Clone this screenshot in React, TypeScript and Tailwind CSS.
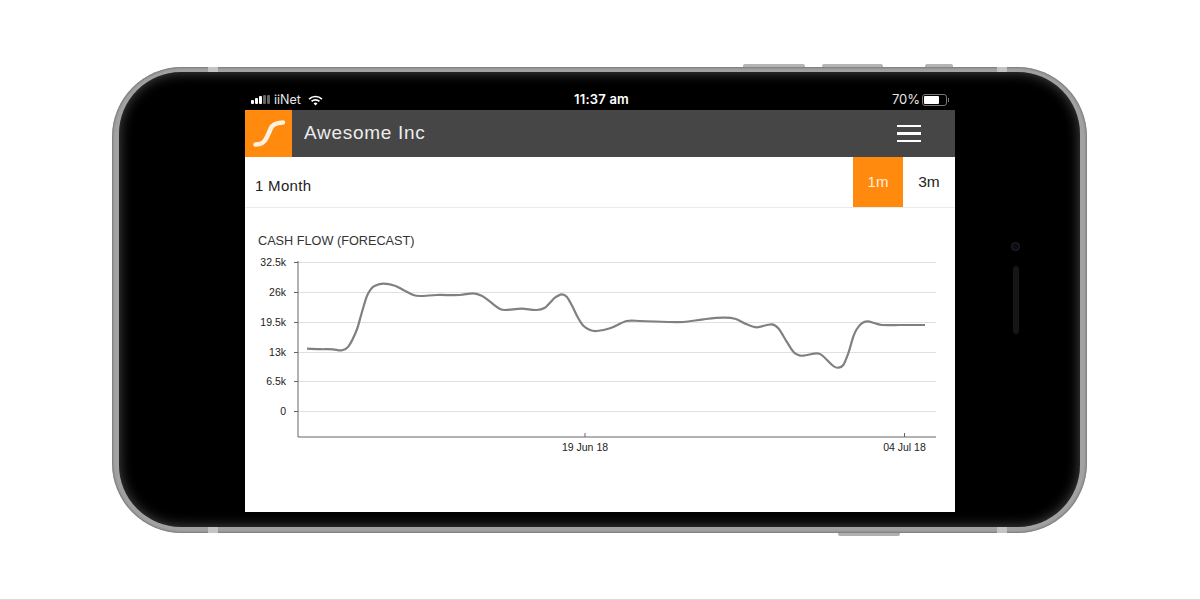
// curve points read off the screenshot, in page pixels
const cashFlow: [number, number][] = [
  [307, 348.7], [320, 349.2], [333, 349.3], [341.7, 350.3], [348.3, 346.7], [356.7, 330], [361.7, 313], [366.7, 296.7],
  [370.7, 289.3], [375, 285.7], [383.3, 283.7], [395, 285.7], [403.3, 290], [413.3, 295], [420, 296], [436.7, 295],
  [460, 295], [473.3, 293.3], [481.7, 295.7], [490, 301.7], [500, 309], [505, 310], [521.7, 308.7],
  [536.7, 310], [545, 307.7], [550, 302.7], [555, 297.7], [561.7, 294.3], [566.7, 296.7], [571.7, 305], [578.3, 318.3],
  [583.3, 325.7], [590, 330], [596.7, 331], [610, 328.3], [626.7, 321], [640, 321], [683.3, 322], [703.3, 319.3],
  [723.3, 317.7], [735, 318.7], [746.7, 324.3], [756.7, 327.3], [771.7, 324.3], [778.3, 328.3],
  [786.7, 341.7], [793.3, 351.7], [798.3, 355], [803.3, 355.7], [816.7, 353.3], [821.7, 355], [833.3, 366], [838.3, 367.7],
  [843.3, 365], [848.3, 353.3], [853.3, 336.7], [856.7, 329.3], [861.7, 323.3], [867.3, 321.3], [875, 323.3], [881.7, 325],
  [900, 325], [925, 325],
];

const yTicks = [
  { label: "32.5k", y: 262.5 },
  { label: "26k", y: 292.5 },
  { label: "19.5k", y: 322.5 },
  { label: "13k", y: 352.5 },
  { label: "6.5k", y: 381.5 },
  { label: "0", y: 411.5 },
];

const xTicks = [
  { label: "19 Jun 18", x: 585 },
  { label: "04 Jul 18", x: 904.5 },
];

// hermite through the points, slope taken from the neighbours so x never doubles back
function smoothPath(pts: [number, number][]) {
  const slope = (i: number) => {
    const a = pts[Math.max(i - 1, 0)];
    const b = pts[Math.min(i + 1, pts.length - 1)];
    return (b[1] - a[1]) / (b[0] - a[0]);
  };
  let d = `M${pts[0][0]} ${pts[0][1]}`;
  for (let i = 0; i < pts.length - 1; i++) {
    const p1 = pts[i];
    const p2 = pts[i + 1];
    const dx = (p2[0] - p1[0]) / 3;
    const c1y = p1[1] + slope(i) * dx;
    const c2y = p2[1] - slope(i + 1) * dx;
    d += ` C${(p1[0] + dx).toFixed(1)} ${c1y.toFixed(1)} ${(p2[0] - dx).toFixed(1)} ${c2y.toFixed(1)} ${p2[0]} ${p2[1]}`;
  }
  return d;
}

function Chart() {
  return (
    <svg viewBox="245 252 710 208" className="block w-[710px] h-[208px]">
      {yTicks.map((t) => (
        <g key={t.label}>
          <line x1="298" x2="936" y1={t.y} y2={t.y} stroke="#e0e0e0" strokeWidth="1" />
          <line x1="294" x2="298" y1={t.y} y2={t.y} stroke="#666" strokeWidth="1" />
          <text
            x="286"
            y={t.y + 3.5}
            textAnchor="end"
            fontSize="10.5"
            fill="#222"
            fontFamily="'Liberation Sans', sans-serif"
          >
            {t.label}
          </text>
        </g>
      ))}
      <path d="M298 261V437H936" fill="none" stroke="#666" strokeWidth="1" />
      {xTicks.map((t) => (
        <g key={t.label}>
          <line x1={t.x} x2={t.x} y1="433" y2="437" stroke="#666" strokeWidth="1" />
          <text
            x={t.x}
            y="451"
            textAnchor="middle"
            fontSize="10.5"
            fill="#222"
            fontFamily="'Liberation Sans', sans-serif"
          >
            {t.label}
          </text>
        </g>
      ))}
      <path d={smoothPath(cashFlow)} fill="none" stroke="#808080" strokeWidth="2.2" strokeLinejoin="round" />
    </svg>
  );
}

function StatusBar() {
  return (
    <div className="h-[22px] pt-[2px] bg-black text-white flex items-center pl-[6px] pr-[6px] text-[12.5px] font-['Inter',sans-serif] relative">
      <div className="flex items-end gap-[1px] h-[8px]">
        <span className="w-[3px] h-[4px] bg-white rounded-[1px]" />
        <span className="w-[3px] h-[6px] bg-white rounded-[1px]" />
        <span className="w-[3px] h-[8px] bg-white rounded-[1px]" />
        <span className="w-[3px] h-[9px] bg-[#666] rounded-[1px]" />
        <span className="w-[3px] h-[9px] bg-[#666] rounded-[1px]" />
      </div>
      <span className="ml-[4px] text-[#e8e8e8]">iiNet</span>
      <svg viewBox="0 0 16 12" className="ml-[7px] w-[15px] h-[11px]" fill="none" stroke="white">
        <path d="M1 4.500a10 10 0 0 1 14 0" strokeWidth="1.8" />
        <path d="M3.700 7a6.200 6.200 0 0 1 8.600 0" strokeWidth="1.8" />
        <path d="M8 11.500 5.900 9.200a3 3 0 0 1 4.200 0z" fill="white" stroke="none" />
      </svg>
      <span className="absolute left-[329px] font-semibold text-[13px] tracking-[0.2px]">11:37 am</span>
      <div className="ml-auto flex items-center">
        <span className="text-[#e8e8e8] text-[13px]">70%</span>
        <div className="ml-[2px] w-[25px] h-[12px] border border-[#777] rounded-[3px] p-[1px]">
          <div className="w-[15px] h-full bg-white rounded-[1px]" />
        </div>
        <span className="ml-[1px] w-[1px] h-[4px] bg-[#777]" />
      </div>
    </div>
  );
}

function Screen() {
  return (
    <div className="w-[710px] h-[424px] bg-white overflow-hidden shrink-0 font-['Liberation_Sans',sans-serif]">
      <StatusBar />
      <div className="h-[47px] bg-[#464646] flex items-center">
        <div className="w-[47px] h-[47px] bg-[#ff8a0d] flex items-center justify-center">
          <svg viewBox="0 0 47 47" className="w-[47px] h-[47px]" fill="none">
            <path
              d="M10.500 34.500c6 0 9-2 11.500-7.500l3.500-8c2-4.500 5-6 12.500-6.500"
              stroke="#fff0e0"
              strokeWidth="4.500"
              strokeLinecap="round"
            />
          </svg>
        </div>
        <span className="ml-[12px] text-[19px] text-[#ececec] tracking-[0.7px]">Awesome Inc</span>
        <div className="ml-auto mr-[34px] w-[24px] flex flex-col gap-[5px]">
          <span className="h-[2.5px] bg-white" />
          <span className="h-[2.5px] bg-white" />
          <span className="h-[2.5px] bg-white" />
        </div>
      </div>
      <div className="h-[51px] border-b border-[#ebebeb] flex items-stretch">
        <span className="ml-[10px] self-center mt-[8px] text-[15px] text-[#222] tracking-[0.3px]">1 Month</span>
        <div className="ml-auto flex h-[50px]">
          <div className="w-[50px] bg-[#ff8a0d] text-[#fff0e0] text-[15px] flex items-center justify-center">1m</div>
          <div className="w-[52px] text-[#222] text-[15.5px] flex items-center justify-center">3m</div>
        </div>
      </div>
      <div className="pt-[25px] pl-[13px] text-[12.7px] leading-[16px] text-[#333] h-[44px]">CASH FLOW (FORECAST)</div>
      <Chart />
    </div>
  );
}

export default function App() {
  return (
    <div className="relative w-[1200px] h-[600px] bg-white border-b border-[#dcdcdc] overflow-hidden pt-[67px] pl-[112px]">
      {/* side buttons */}
      <div className="absolute top-[64px] left-[743px] w-[62px] h-[4px] bg-[#b4b4b4] rounded-t-[2px]" />
      <div className="absolute top-[64px] left-[822px] w-[61px] h-[4px] bg-[#b4b4b4] rounded-t-[2px]" />
      <div className="absolute top-[64px] left-[925px] w-[28px] h-[4px] bg-[#b4b4b4] rounded-t-[2px]" />
      <div className="absolute top-[532px] left-[838px] w-[62px] h-[4px] bg-[#b0b0b0] rounded-b-[2px]" />

      {/* phone body */}
      <div className="relative w-[975px] h-[466px] rounded-[70px] bg-[#a2a2a2] shadow-[inset_0_0_3px_#4a4a4a] pt-[5px] pb-[6px] px-[7px]">
        <span className="absolute top-0 left-[96px] w-[10px] h-[5px] bg-[#c4c4c4]" />
        <span className="absolute top-0 left-[885px] w-[10px] h-[5px] bg-[#c4c4c4]" />
        <span className="absolute bottom-0 left-[96px] w-[10px] h-[6px] bg-[#c4c4c4]" />
        <span className="absolute bottom-0 left-[885px] w-[10px] h-[6px] bg-[#c4c4c4]" />
        <div className="h-full rounded-[62px] bg-black shadow-[inset_0_0_13px_rgba(255,255,255,0.3)] flex items-start pl-[126px] pt-[16px]">
          <Screen />
          <div className="ml-[56px] mt-[154px] flex flex-col items-center">
            <div className="w-[9px] h-[9px] rounded-full bg-[#0c0c18] border border-[#26262c]" />
            <div className="mt-[15px] w-[6px] h-[68px] rounded-full bg-[#161616]" />
          </div>
        </div>
      </div>
    </div>
  );
}
